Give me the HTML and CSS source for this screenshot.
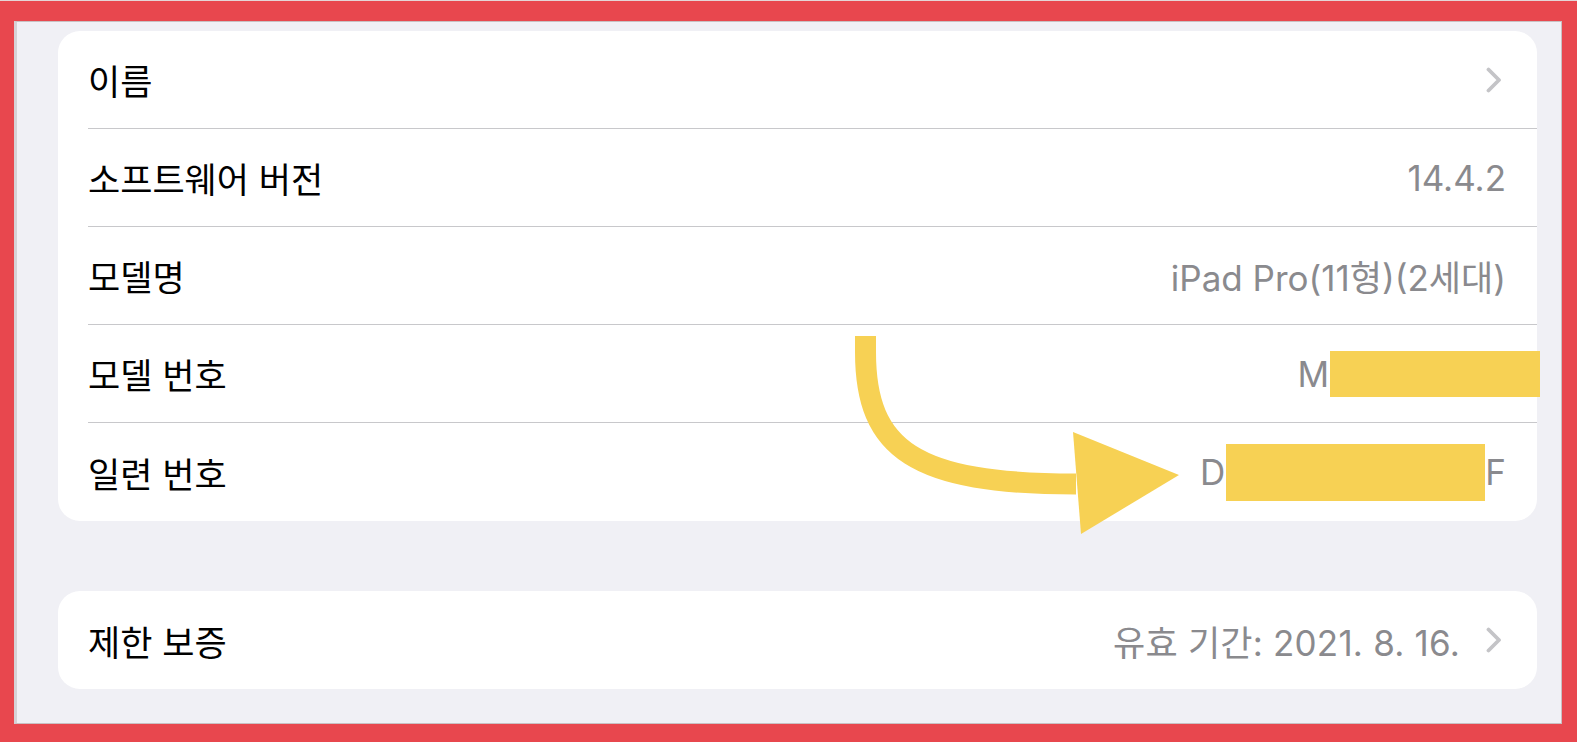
FILE: index.html
```html
<!DOCTYPE html>
<html lang="ko">
<head>
    <meta charset="UTF-8">
    <meta name="viewport" content="width=device-width, initial-scale=1.0">
    <title>정보</title>
    <link rel="stylesheet" href="styles.css">
</head>
<body>
    <div class="screen">
        <section class="card">
            <div class="row">
                <span class="label">이름</span>
                <span class="value">
                    <svg class="chevron" width="16" height="26" viewBox="0 0 16 26"><path d="M2.5 2.5 L13 13 L2.5 23.5" fill="none" stroke="#c4c4c7" stroke-width="3.8" stroke-linecap="round" stroke-linejoin="round"/></svg>
                </span>
            </div>
            <div class="row">
                <span class="label">소프트웨어 버전</span>
                <span class="value">14.4.2</span>
            </div>
            <div class="row">
                <span class="label">모델명</span>
                <span class="value">iPad Pro(11형)(2세대)</span>
            </div>
            <div class="row">
                <span class="label">모델 번호</span>
                <span class="value">M<span class="redact redact-model"></span></span>
            </div>
            <div class="row">
                <span class="label">일련 번호</span>
                <span class="value">D<span class="redact redact-serial"></span>F</span>
            </div>
        </section>

        <section class="card">
            <div class="row">
                <span class="label">제한 보증</span>
                <span class="value date">유효 기간: 2021. 8. 16.
                    <svg class="chevron" width="16" height="26" viewBox="0 0 16 26"><path d="M2.5 2.5 L13 13 L2.5 23.5" fill="none" stroke="#c4c4c7" stroke-width="3.8" stroke-linecap="round" stroke-linejoin="round"/></svg>
                </span>
            </div>
        </section>

        <!-- annotation arrow -->
        <svg class="arrow" width="1577" height="742" viewBox="0 0 1577 742">
            <path d="M865.5 336 L865.5 352 C865.5 450 915 484 1076 484" fill="none" stroke="#f7d154" stroke-width="21"/>
            <polygon points="1073,432 1179,475 1081,534" fill="#f7d154"/>
        </svg>
    </div>
</body>
</html>
```

FILE: styles.css
```css
*{
    margin: 0;
    padding: 0;
    box-sizing: border-box;
}
body{
    width: 1577px;
    height: 742px;
    background-color: #e8474e;
    border-top: 1px solid #e4d6d7;
    padding: 20px 15px 18px 14px;
    font-family: Inter, "Noto Sans CJK KR", sans-serif;
    overflow: hidden;
}
.screen{
    position: relative;
    height: 100%;
    background-color: #f0f0f5;
    border: 1px solid #c9c0c2;
    border-left: 3px solid #d6d2d6;
    padding: 9px 24px 0 41px;
    display: flex;
    flex-direction: column;
    gap: 70px;
}
.card{
    background-color: white;
    border-radius: 22px;
    display: flex;
    flex-direction: column;
}
.row{
    height: 98px;
    margin-left: 30px;
    padding-right: 31px;
    display: flex;
    align-items: center;
    justify-content: space-between;
    border-bottom: 1px solid #c8c8cb;
}
.row:last-child{
    border-bottom: none;
}
.label{
    font-size: 35px;
    color: #000;
}
.value{
    font-size: 35px;
    color: #8a8a8e;
    display: flex;
    align-items: center;
}
.date{
    letter-spacing: 0.2px;
}
.chevron{
    margin-left: 26px;
    margin-right: 4px;
}
.redact{
    display: inline-block;
    background-color: #f7d154;
}
.redact-model{
    width: 210px;
    height: 46px;
    margin-left: 1px;
    margin-right: -34px;
}
.redact-serial{
    width: 259px;
    height: 57px;
    margin-left: 1px;
    margin-right: 0;
}
.arrow{
    position: absolute;
    left: -17px;
    top: -22px;
    pointer-events: none;
}
```
